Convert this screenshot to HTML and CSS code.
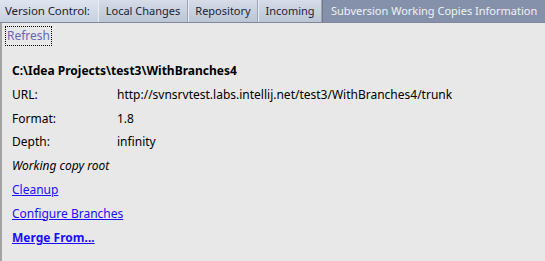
FILE: index.html
```html
<!DOCTYPE html>
<html>
<head>
<meta charset="utf-8">
<link rel="stylesheet" href="styles.css">
</head>
<body>
<div class="tabbar">
  <div class="label">Version Control:</div>
  <div class="tab t-local">Local Changes</div>
  <div class="tab t-repo">Repository</div>
  <div class="tab t-inc">Incoming</div>
  <div class="tab selected">Subversion Working Copies Information</div>
</div>
<div class="content">
  <div class="toolbar"><span class="refresh">Refresh</span></div>
  <div class="info">
    <div class="row path">C:\Idea Projects\test3\WithBranches4</div>
    <div class="row"><span class="key">URL:</span><span>http://svnsrvtest.labs.intellij.net/test3/WithBranches4/trunk</span></div>
    <div class="row"><span class="key">Format:</span><span>1.8</span></div>
    <div class="row"><span class="key">Depth:</span><span>infinity</span></div>
    <div class="row italic">Working copy root</div>
    <div class="row"><a class="link" href="#">Cleanup</a></div>
    <div class="row"><a class="link" href="#">Configure Branches</a></div>
    <div class="row"><a class="link bold" href="#">Merge From...</a></div>
  </div>
</div>
</body>
</html>
```
FILE: styles.css
```css
html, body {
  margin: 0;
  padding: 0;
  background: #e8e8e8;
  font-family: "Noto Sans", "Open Sans", sans-serif;
  font-size: 12px;
  color: #000;
  width: 545px;
  height: 261px;
  overflow: hidden;
}
.tabbar {
  display: flex;
  height: 22px;
  background: linear-gradient(#dfe5ef, #c8d0de);
  border-bottom: 1px solid #7e8898;
  color: #1b2333;
  font-size: 11.5px;
}
.label {
  width: 98px;
  box-sizing: border-box;
  padding-left: 5px;
  line-height: 22px;
  white-space: nowrap;
  letter-spacing: -0.1px;
}
.tab {
  box-sizing: border-box;
  line-height: 21px;
  text-align: center;
  border-left: 1px solid #e8edf5;
  border-right: 1px solid #9aa4b4;
  white-space: nowrap;
  background: linear-gradient(#d6dce8, #bcc5d4);
  font-size: 11px;
}
.t-local { width: 90px; }
.t-repo { width: 70px; }
.t-inc { width: 64px; }
.tab.selected {
  flex: 1;
  background: #8591aa;
  color: #eef1f6;
  border-left: 1px solid #6f7b92;
  border-right: none;
  text-align: left;
  padding-left: 8px;
  font-size: 11px;
}
.content {
  border-left: 2px solid #a3a3a3;
  height: 238px;
}
.toolbar {
  padding: 3px 0 0 3px;
  height: 20px;
}
.refresh {
  display: inline-block;
  border: 1px dotted #000;
  padding: 0 1px;
  line-height: 18px;
  color: #6767b5;
}
.info {
  padding: 13px 0 0 10px;
  display: flex;
  flex-direction: column;
}
.row {
  display: flex;
  height: 23.8px;
  line-height: 23.8px;
  white-space: nowrap;
}
.key {
  width: 105px;
}
.path {
  font-weight: bold;
}
.italic {
  font-style: italic;
}
.link {
  color: #1a0dff;
  text-decoration: underline;
}
.bold {
  font-weight: bold;
}
```
